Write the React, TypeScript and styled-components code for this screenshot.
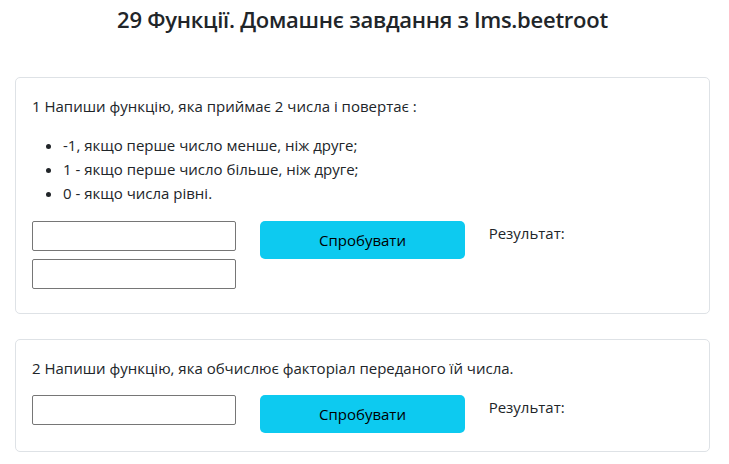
import React from "react";
import styled, { createGlobalStyle } from "styled-components";

const Global = createGlobalStyle`
  html, body { margin: 0; padding: 0; background: #fff; }
  body { font-family: "Open Sans", "Noto Sans", sans-serif; color: #212529; font-size: 15px; }
  * { box-sizing: border-box; }
`;

const Page = styled.div`
  padding: 0 19px 0 15px;
`;

const Title = styled.h1`
  margin: 0 0 43px;
  padding-top: 4px;
  text-align: center;
  font-size: 22px;
  font-weight: 600;
  line-height: 30px;
  letter-spacing: -0.25px;
`;

const Card = styled.section`
  border: 1px solid #dee2e6;
  border-radius: 5px;
  padding: 16px;
  margin-bottom: 25px;
`;

const Task = styled.p`
  margin: 1px 0 16px;
  line-height: 22px;
`;

const List = styled.ul`
  margin: 0 0 16px;
  padding-left: 31px;
  line-height: 24px;
`;

const Row = styled.div`
  display: grid;
  grid-template-columns: repeat(3, 1fr);
  column-gap: 24px;
  align-items: start;
`;

const Inputs = styled.div`
  display: flex;
  flex-direction: column;
`;

const Field = styled.input`
  height: 30px;
  width: 100%;
  margin-bottom: 8px;
  border: 1px solid #767676;
  border-radius: 2px;
  font: inherit;
`;

const Button = styled.button`
  height: 38px;
  width: 100%;
  margin-bottom: 2px;
  border: none;
  border-radius: 5px;
  background: #0dcaf0;
  color: #000;
  font: inherit;
`;

const Result = styled.div`
  padding-top: 1px;
  line-height: 22px;
`;

export default function App() {
  return (
    <Page>
      <Global />
      <Title>29 Функції. Домашнє завдання з lms.beetroot</Title>
      <Card>
        <Task>1 Напиши функцію, яка приймає 2 числа і повертає :</Task>
        <List>
          <li>-1, якщо перше число менше, ніж друге;</li>
          <li>1 - якщо перше число більше, ніж друге;</li>
          <li>0 - якщо числа рівні.</li>
        </List>
        <Row>
          <Inputs>
            <Field />
            <Field />
          </Inputs>
          <Button>Спробувати</Button>
          <Result>Результат:</Result>
        </Row>
      </Card>
      <Card>
        <Task>2 Напиши функцію, яка обчислює факторіал переданого їй числа.</Task>
        <Row>
          <Inputs>
            <Field />
          </Inputs>
          <Button>Спробувати</Button>
          <Result>Результат:</Result>
        </Row>
      </Card>
    </Page>
  );
}
